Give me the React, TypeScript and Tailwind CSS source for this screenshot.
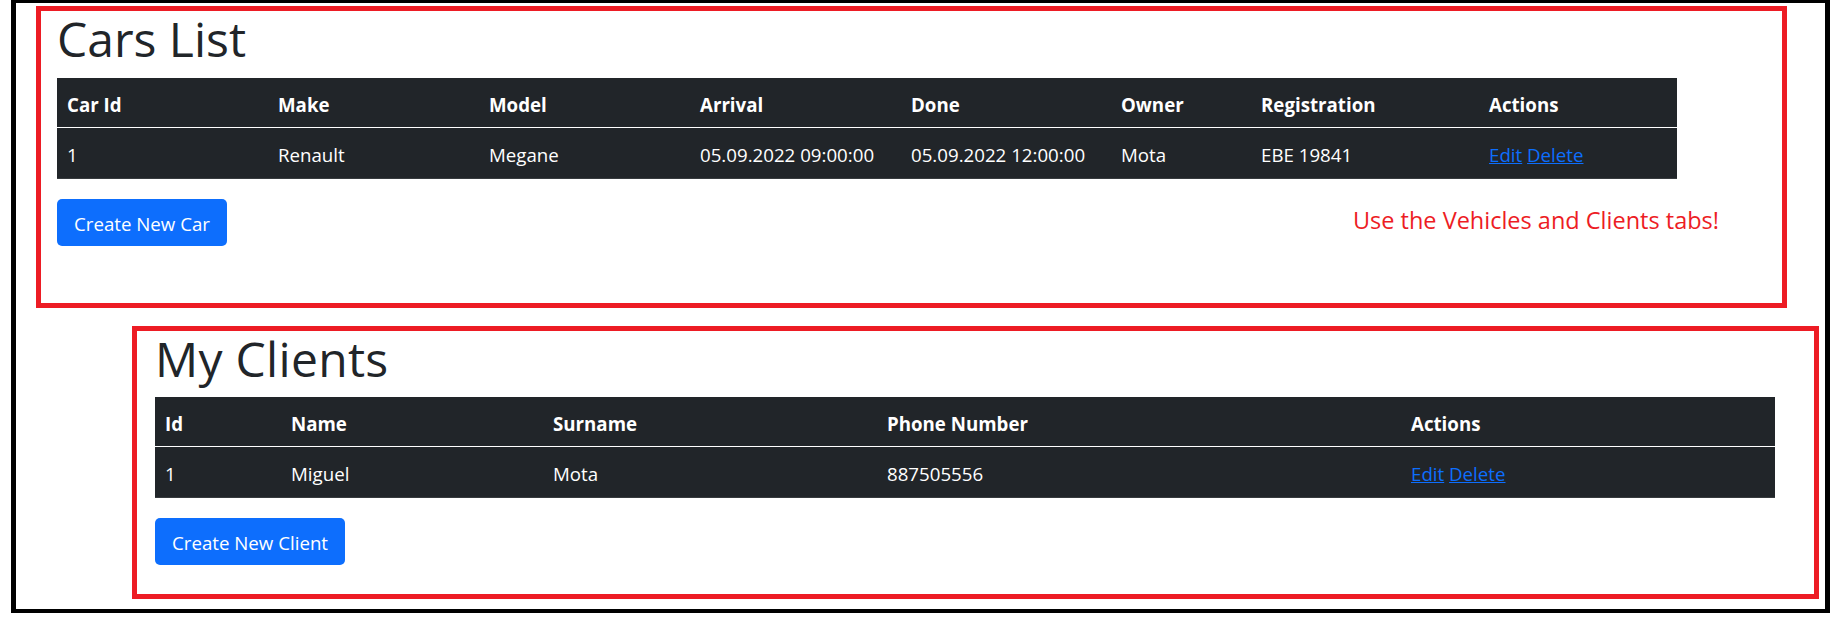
const cars = [
  {
    id: 1,
    make: 'Renault',
    model: 'Megane',
    arrival: '05.09.2022 09:00:00',
    done: '05.09.2022 12:00:00',
    owner: 'Mota',
    registration: 'EBE 19841',
  },
]

const clients = [{ id: 1, name: 'Miguel', surname: 'Mota', phone: '887505556' }]

const carCols = 'grid-cols-[211px_211px_211px_211px_210px_140px_228px_198px]'
const clientCols = 'grid-cols-[126px_262px_334px_524px_374px]'

function Actions() {
  return (
    <span>
      <a href="#" className="text-[#0d6efd] underline">Edit</a>{' '}
      <a href="#" className="text-[#0d6efd] underline">Delete</a>
    </span>
  )
}

function Cell({ children, head }: { children: React.ReactNode; head?: boolean }) {
  return (
    <div className={`flex items-center pl-[10px] pt-[5px] whitespace-nowrap ${head ? 'font-bold' : ''}`}>
      {children}
    </div>
  )
}

export default function App() {
  return (
    <div className="w-[1837px] h-[623px] bg-white text-[18.7px] text-[#212529] font-['Open_Sans',sans-serif]">
      <div className="ml-[11px] w-[1819px] h-[613px] border-black border-x-[5px] border-t-[3px] border-b-[4px]">
        {/* cars */}
        <section className="ml-[20px] mt-[3px] w-[1751px] h-[302px] border-[5px] border-[#ed1c24] pl-[16px] pt-[3px]">
          <h1 className="text-[48px] leading-[50px] font-medium">Cars List</h1>
          <div className="mt-[14px] w-[1620px] bg-[#212529] text-white">
            <div className={`grid ${carCols} h-[50px] border-b border-white`}>
              <Cell head>Car Id</Cell>
              <Cell head>Make</Cell>
              <Cell head>Model</Cell>
              <Cell head>Arrival</Cell>
              <Cell head>Done</Cell>
              <Cell head>Owner</Cell>
              <Cell head>Registration</Cell>
              <Cell head>Actions</Cell>
            </div>
            {cars.map((c) => (
              <div key={c.id} className={`grid ${carCols} h-[51px] border-b border-[#373b3e]`}>
                <Cell>{c.id}</Cell>
                <Cell>{c.make}</Cell>
                <Cell>{c.model}</Cell>
                <Cell>{c.arrival}</Cell>
                <Cell>{c.done}</Cell>
                <Cell>{c.owner}</Cell>
                <Cell>{c.registration}</Cell>
                <Cell><Actions /></Cell>
              </div>
            ))}
          </div>
          <div className="mt-[20px] flex items-start">
            <button className="w-[170px] h-[47px] pt-[4px] rounded-[5px] bg-[#0d6efd] text-white">
              Create New Car
            </button>
            <p className="ml-auto mr-[63px] mt-[5px] text-[23.5px] leading-[32px] text-[#ed1c24]">
              Use the Vehicles and Clients tabs!
            </p>
          </div>
        </section>

        {/* clients */}
        <section className="ml-[116px] mt-[18px] w-[1687px] h-[273px] border-[5px] border-[#ed1c24] pl-[18px] pt-[3px]">
          <h1 className="text-[48px] leading-[50px] font-medium tracking-[0.3px]">My Clients</h1>
          <div className="mt-[13px] w-[1620px] bg-[#212529] text-white">
            <div className={`grid ${clientCols} h-[50px] border-b border-white`}>
              <Cell head>Id</Cell>
              <Cell head>Name</Cell>
              <Cell head>Surname</Cell>
              <Cell head>Phone Number</Cell>
              <Cell head>Actions</Cell>
            </div>
            {clients.map((c) => (
              <div key={c.id} className={`grid ${clientCols} h-[51px] border-b border-[#373b3e]`}>
                <Cell>{c.id}</Cell>
                <Cell>{c.name}</Cell>
                <Cell>{c.surname}</Cell>
                <Cell>{c.phone}</Cell>
                <Cell><Actions /></Cell>
              </div>
            ))}
          </div>
          <button className="mt-[20px] w-[190px] h-[47px] pt-[4px] rounded-[5px] bg-[#0d6efd] text-white">
            Create New Client
          </button>
        </section>
      </div>
    </div>
  )
}
